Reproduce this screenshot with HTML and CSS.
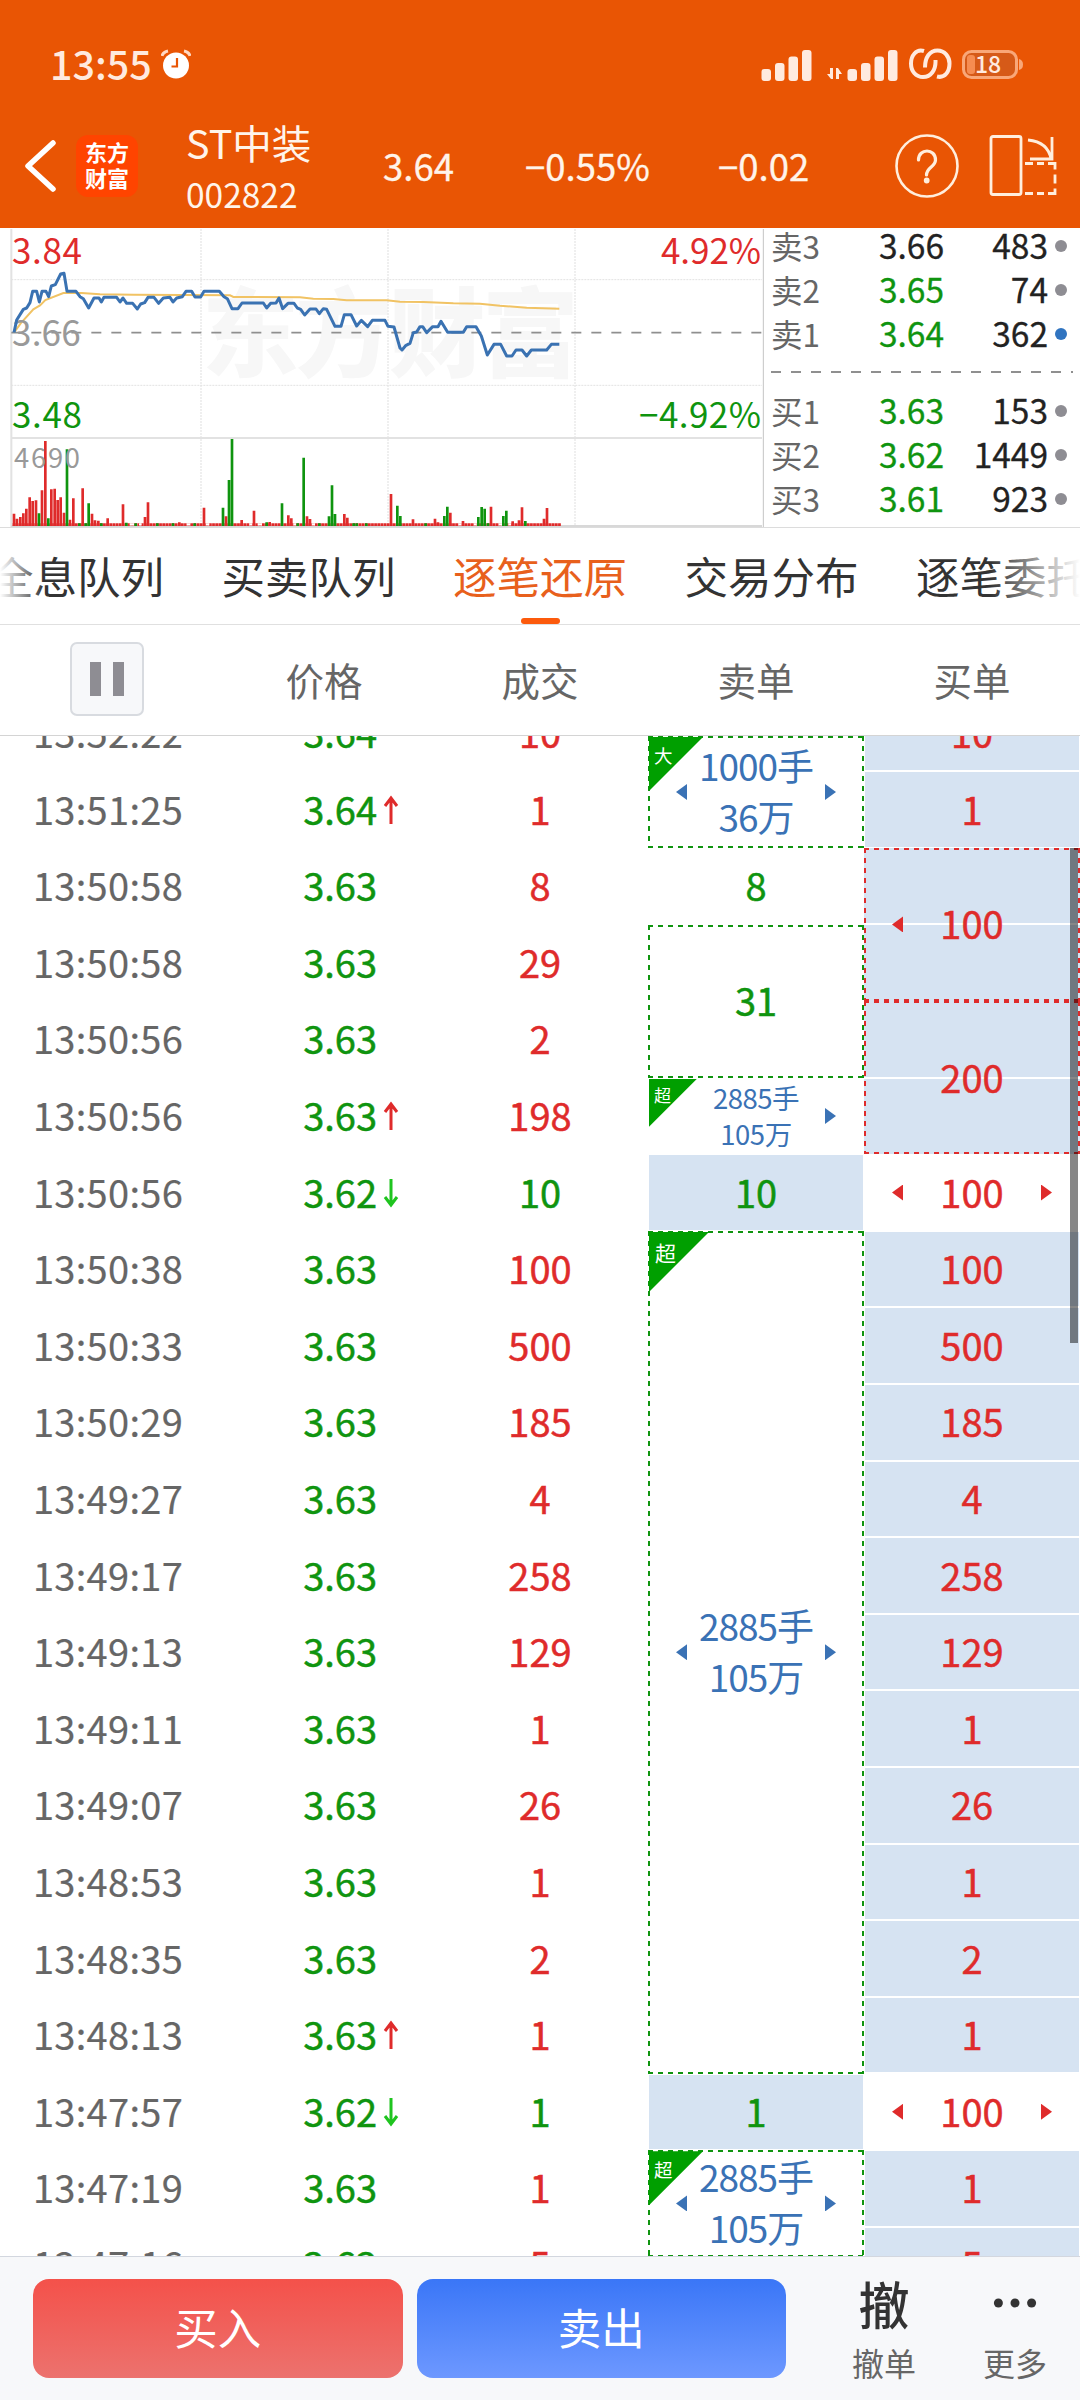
FILE: index.html
```html
<!doctype html>
<html lang="zh-CN">
	<head>
		<meta charset="utf-8" />
		<meta name="viewport" content="width=device-width, initial-scale=1" />
		<title>ST中装 逐笔还原</title>
		<link rel="stylesheet" href="styles.css" />
	</head>
	<body>
		<header class="header">
			<div class="status">
				<span class="status-time">13:55</span>
				<svg class="status-alarm" width="30" height="30" viewBox="0 0 30 30">
					<circle cx="15" cy="16.5" r="13" fill="#fff" />
					<path d="M1 7Q2 3 7 2M29 7Q28 3 23 2" stroke="#ffd9c4" stroke-width="3" fill="none" />
					<path d="M16 9v8.5h-5.500" stroke="#e95504" stroke-width="2.200" fill="none" />
				</svg>
				<svg class="status-icons" width="264" height="34" viewBox="0 0 264 34" fill="#ffeadf">
					<g id="bars">
						<rect x="1.500" y="21" width="9.500" height="12" rx="3" />
						<rect x="15" y="15" width="9.500" height="18" rx="3" />
						<rect x="28.500" y="8.500" width="9.500" height="24.500" rx="3" />
						<rect x="42" y="2" width="9.500" height="31" rx="3" />
					</g>
					<use href="#bars" x="86" />
					<path d="M73 20v11h-2l-4-5h3v-6zM76 31V20h2l4 6h-3v5z" />
					<path
						d="M164 3C156 .5 151 8 151 15.500c0 8 5 13.500 12 13.500 8 0 13-7 12.500-17M177 28.500c8 2 12.500-5 12.500-13 0-7-5-13-12-13-8 0-12.500 7-12.500 17"
						fill="none" stroke="#ffeadf" stroke-width="4" />
					<rect x="203.500" y="3.500" width="53" height="26" rx="8" fill="#d65a18" stroke="#f9a778" stroke-width="3" />
					<rect x="207" y="7" width="8" height="19" rx="3" fill="#f68c51" />
					<path d="M259 11q4 1 4 5.500t-4 5.500z" fill="#f9a778" />
					<text class="battery-text" x="228" y="25" text-anchor="middle">18</text>
				</svg>
			</div>
			<nav class="nav">
				<svg class="back" width="32" height="52" viewBox="0 0 32 52">
					<path d="M29 3L4 26l25 23" fill="none" stroke="#fff" stroke-width="5.500" stroke-linecap="round" stroke-linejoin="round" />
				</svg>
				<div class="logo">东方<br />财富</div>
				<div class="stock">
					<div class="stock-name">ST中装</div>
					<div class="stock-code">002822</div>
				</div>
				<div class="quote quote-price">3.64</div>
				<div class="quote quote-rate">−0.55%</div>
				<div class="quote quote-diff">−0.02</div>
				<div class="help">
					<svg width="64" height="64" viewBox="0 0 64 64" fill="none" stroke="#ffeedd" stroke-width="2.600">
						<circle cx="32" cy="32" r="30.500" />
						<path d="M23.500 26c0-12 17-12 17 0 0 7-9 7-9 15" stroke-width="3.200" stroke-linecap="round" />
						<circle cx="31.700" cy="46.500" r="1.600" fill="#ffeedd" />
					</svg>
				</div>
				<svg class="rotate" width="68" height="64" viewBox="0 0 68 64" fill="none" stroke="#ffeedd" stroke-width="2.800">
					<rect x="2" y="2.500" width="30" height="58" rx="2" />
					<path d="M39 6q20 2 23 19M63 3v22H41" />
					<path d="M36 29.500h8m4 0h7m4 0h7v6m0 5v9m0 5v5h-7m-4 0h-7m-4 0h-8" />
				</svg>
			</nav>
		</header>

		<section class="market">
			<svg class="chart" viewBox="0 27 2292 894">
				<text class="watermark" x="606" y="446" textLength="1130">东方财富</text>
				<g stroke="#e2e2e2" stroke-width="4" fill="none">
					<path d="M603 27V918M1164 27V918M1725 27V918" stroke-dasharray="6 3" stroke="#e8e8e8" />
					<path d="M34 179H2286M34 496H2286" stroke-width="3" stroke-dasharray="6 3" />
					<path d="M34 27V921M34 654H2286" stroke-width="6" />
					<path d="M34 918H2286" stroke-width="6" stroke="#d8d8d8" />
				</g>
				<path d="M2290 27V921" stroke="#c4c4c4" stroke-width="3" />
				<path d="M34 338H2286" stroke="#8f8f8f" stroke-width="5" stroke-dasharray="30 30" />
				<path class="vol-red" stroke-dasharray="8.300 1.050" d="M38 914H1683" />
				<path
					class="vol-red"
					d="M42 918V881M51 918V896M61 918V891M70 918V880M79 918V866M89 918V832M98 918V843M108 918V841M126 918V811M136 918V663M154 918V808M164 918V806M173 918V840M182 918V832M192 918V878M210 918V899M220 918V835M248 918V805M276 918V881M285 918V901M295 918V902M323 918V895M369 918V853M435 918V891M444 918V847M538 918V907M612 918V863M678 918V889M725 918V900M762 918V872M809 918V906M865 918V886M874 918V895M921 918V889M930 918V897M1033 918V882M1042 918V893M1173 918V822M1239 918V898M1305 918V896M1314 918V907M1351 918V878M1389 918V903M1473 918V860M1538 918V904M1557 918V901M1566 918V862M1632 918V896M1641 918V864" />
				<path
					class="vol-green"
					d="M117 918V880M145 918V895M201 918V688M238 918V910M257 918V910M266 918V850M304 918V910M379 918V908M407 918V910M472 918V910M519 918V910M584 918V910M669 918V863M687 918V780M696 918V657M800 918V907M846 918V850M893 918V910M911 918V713M958 918V910M987 918V889M996 918V796M1005 918V882M1061 918V910M1070 918V910M1099 918V910M1192 918V857M1201 918V888M1277 918V910M1333 918V888M1342 918V860M1435 918V891M1445 918V861M1454 918V866M1464 918V910M1510 918V888M1519 918V872M1576 918V903" />
				<path d="M389 913h13M417 913h8M560 913h10M618 913h10M748 913h8M773 913h13M880 913h8M936 913h9M1375 913h9M1422 913h8M1496 913h10M1525 913h8" stroke="#fff" stroke-width="7" />
				<path
					d="M42 338L62 310L100 268L120 256L136 240L190 219L245 219L300 223L400 224L690 226L700 231L900 232L940 236L1000 237L1040 241L1160 241L1200 245L1270 246L1360 250L1440 251L1500 257L1580 263L1678 266"
					fill="none" stroke="#f1c364" stroke-width="6" />
				<text class="label-gray" x="36" y="377" textLength="206">3.66</text>
				<path
					d="M42 338L50 300L70 268L80 264L90 248L98 214L110 214L118 246L126 214L138 214L146 230L154 198L166 194L182 162L192 160L201 214L228 214L240 230L250 236L266 264L282 234L297 234L304 246L312 232L350 232L360 246L369 234L380 250L398 250L412 267L422 252L434 248L444 232L462 232L476 250L490 234L510 232L519 246L530 234L547 230L558 214L575 214L585 231L602 231L612 214L658 214L672 230L682 236L696 266L714 266L726 249L790 249L800 264L812 250L828 249L837 234L848 266L864 250L882 250L892 264L902 268L914 285L930 267L948 267L958 281L970 266L980 268L1005 319L1023 319L1033 284L1053 284L1070 318L1084 301L1103 320L1117 301L1155 301L1164 319L1182 321L1200 384L1206 390L1218 376L1230 370L1240 338L1250 336L1260 320L1268 320L1280 338L1298 320L1314 320L1323 304L1343 337L1390 337L1400 320L1428 320L1444 348L1462 405L1482 373L1502 373L1520 408L1536 408L1548 390L1566 390L1580 408L1594 390L1640 390L1654 373L1678 373"
					fill="none" stroke="#3a72b2" stroke-width="9" stroke-linejoin="round" />
				<text class="label-red" x="36" y="132" textLength="210">3.84</text>
				<text class="label-green" x="36" y="624" textLength="210">3.48</text>
				<text class="label-red" x="2283" y="132" text-anchor="end" textLength="300">4.92%</text>
				<text class="label-green" x="2283" y="624" text-anchor="end" textLength="366">−4.92%</text>
				<text class="label-volume" x="42" y="743" textLength="198">4690</text>
			</svg>
			<div class="book">
				<div class="book-row"><span>卖3</span><b class="flat">3.66</b><b>483</b><i></i></div>
				<div class="book-row"><span>卖2</span><b class="down">3.65</b><b>74</b><i></i></div>
				<div class="book-row"><span>卖1</span><b class="down">3.64</b><b>362</b><i class="active"></i></div>
				<div class="book-split"></div>
				<div class="book-row"><span>买1</span><b class="down">3.63</b><b>153</b><i></i></div>
				<div class="book-row"><span>买2</span><b class="down">3.62</b><b>1449</b><i></i></div>
				<div class="book-row"><span>买3</span><b class="down">3.61</b><b>923</b><i></i></div>
			</div>
		</section>

		<div class="tabs">
			<span>全息队列</span>
			<span>买卖队列</span>
			<span class="tab-active">逐笔还原</span>
			<span>交易分布</span>
			<span>逐笔委托</span>
		</div>

		<div class="columns">
			<div><button class="pause" aria-label="暂停"></button></div>
			<div>价格</div>
			<div>成交</div>
			<div>卖单</div>
			<div>买单</div>
		</div>

		<main class="list">
			<div class="col col-time">
				<div>13:52:22</div>
				<div>13:51:25</div>
				<div>13:50:58</div>
				<div>13:50:58</div>
				<div>13:50:56</div>
				<div>13:50:56</div>
				<div>13:50:56</div>
				<div>13:50:38</div>
				<div>13:50:33</div>
				<div>13:50:29</div>
				<div>13:49:27</div>
				<div>13:49:17</div>
				<div>13:49:13</div>
				<div>13:49:11</div>
				<div>13:49:07</div>
				<div>13:48:53</div>
				<div>13:48:35</div>
				<div>13:48:13</div>
				<div>13:47:57</div>
				<div>13:47:19</div>
				<div>13:47:16</div>
			</div>
			<div class="col col-price">
				<div>3.64</div>
				<div>3.64<svg class="up" viewBox="0 0 16 30"><path d="M8 29V3M2 11L8 3l6 8" /></svg></div>
				<div>3.63</div>
				<div>3.63</div>
				<div>3.63</div>
				<div>3.63<svg class="up" viewBox="0 0 16 30"><path d="M8 29V3M2 11L8 3l6 8" /></svg></div>
				<div>3.62<svg class="fall" viewBox="0 0 16 30"><path d="M8 1v26M2 19l6 8 6-8" /></svg></div>
				<div>3.63</div>
				<div>3.63</div>
				<div>3.63</div>
				<div>3.63</div>
				<div>3.63</div>
				<div>3.63</div>
				<div>3.63</div>
				<div>3.63</div>
				<div>3.63</div>
				<div>3.63</div>
				<div>3.63<svg class="up" viewBox="0 0 16 30"><path d="M8 29V3M2 11L8 3l6 8" /></svg></div>
				<div>3.62<svg class="fall" viewBox="0 0 16 30"><path d="M8 1v26M2 19l6 8 6-8" /></svg></div>
				<div>3.63</div>
				<div>3.63</div>
			</div>
			<div class="col col-volume">
				<div>10</div>
				<div>1</div>
				<div>8</div>
				<div>29</div>
				<div>2</div>
				<div>198</div>
				<div class="down">10</div>
				<div>100</div>
				<div>500</div>
				<div>185</div>
				<div>4</div>
				<div>258</div>
				<div>129</div>
				<div>1</div>
				<div>26</div>
				<div>1</div>
				<div>2</div>
				<div>1</div>
				<div class="down">1</div>
				<div>1</div>
				<div>5</div>
			</div>
			<div class="col col-sell">
				<div class="order box clip-top">
					<em class="badge badge-m">大</em>
					<span class="arrow-left"></span><p>1000手<br />36万</p><span class="arrow-right"></span>
				</div>
				<div>8</div>
				<div class="box rows-2">31</div>
				<div class="order order-small">
					<em class="badge badge-s">超</em>
					<p>2885手<br />105万</p><span class="arrow-right"></span>
				</div>
				<div class="fill">10</div>
				<div class="order box rows-11">
					<em class="badge badge-l">超</em>
					<span class="arrow-left"></span><p>2885手<br />105万</p><span class="arrow-right"></span>
				</div>
				<div class="fill">1</div>
				<div class="order box clip-bottom">
					<em class="badge badge-m">超</em>
					<span class="arrow-left"></span><p>2885手<br />105万</p><span class="arrow-right"></span>
				</div>
			</div>
			<div class="col col-buy">
				<div class="fill">10</div>
				<div class="fill">1</div>
				<div class="box rows-2"><span class="arrow-left"></span>100</div>
				<div class="box rows-2">200</div>
				<div><span class="arrow-left"></span>100<span class="arrow-right"></span></div>
				<div class="fill">100</div>
				<div class="fill">500</div>
				<div class="fill">185</div>
				<div class="fill">4</div>
				<div class="fill">258</div>
				<div class="fill">129</div>
				<div class="fill">1</div>
				<div class="fill">26</div>
				<div class="fill">1</div>
				<div class="fill">2</div>
				<div class="fill">1</div>
				<div><span class="arrow-left"></span>100<span class="arrow-right"></span></div>
				<div class="fill">1</div>
				<div class="fill">5</div>
			</div>
			<div class="scrollbar"></div>
		</main>

		<footer class="footer">
			<button class="trade trade-buy">买入</button>
			<button class="trade trade-sell">卖出</button>
			<div class="tool">
				<span class="tool-icon">撤</span>
				<span class="tool-label">撤单</span>
			</div>
			<div class="tool tool-more">
				<span class="tool-icon"><svg width="44" height="10" viewBox="0 0 44 10" fill="#333"><circle cx="5.400" cy="5" r="4.500" /><circle cx="22" cy="5" r="4.500" /><circle cx="38.600" cy="5" r="4.500" /></svg></span>
				<span class="tool-label">更多</span>
			</div>
		</footer>
	</body>
</html>
```
FILE: styles.css
```css
:root {
	--red: #df2b2b;
	--green: #0f940f;
	--blue: #3a72b5;
	--fill: #d6e3f2;
	--row: 76.6px;
}

* {
	box-sizing: border-box;
}

body {
	background: #fff;
	color: #333;
	display: flex;
	flex-direction: column;
	font-family: "Noto Sans CJK SC", sans-serif;
	height: 2400px;
	margin: 0;
	overflow: hidden;
	width: 1080px;
}

button {
	border: 0;
	font-family: inherit;
	padding: 0;
}

/* Header */
.header {
	background: #e95504;
	color: #fff4ea;
	height: 228px;
}

.status {
	align-items: flex-start;
	display: flex;
	height: 104px;
	padding: 48px 56px 0 50px;
}

.status-time {
	color: #ffeadf;
	font-size: 39.5px;
	font-weight: 500;
	line-height: 32px;
	margin-top: -1px;
	width: 111px;
}

.status-alarm {
	margin-top: 1px;
}

.status-icons {
	margin-left: auto;
}

.battery-text {
	font-size: 23px;
	font-weight: 500;
}

.nav {
	align-items: center;
	display: flex;
	height: 124px;
	padding-left: 24px;
}

.back {
	margin-right: 20px;
}

.logo {
	background: #ff4400;
	border-radius: 12px;
	color: #fff;
	font-size: 22px;
	font-weight: 700;
	height: 62px;
	line-height: 26px;
	padding-top: 3px;
	text-align: center;
	width: 62px;
}

.stock {
	margin-left: 48px;
	width: 196px;
}

.stock-name {
	font-size: 39.5px;
	line-height: 52px;
	margin-top: 4px;
}

.stock-code {
	font-size: 33.5px;
	line-height: 52px;
}

.quote {
	font-size: 36.5px;
	line-height: 40px;
	-webkit-text-stroke: 0.3px;
}

.quote-price {
	margin-left: 1px;
	width: 142px;
}

.quote-rate {
	width: 193px;
}

.quote-diff {
	width: 177px;
}

.help {
	height: 64px;
	width: 94px;
}

/* Intraday chart and order book */
.market {
	border-bottom: 1px solid #dcdcdc;
	display: flex;
	height: 300px;
	padding-top: 1px;
}

.chart {
	flex: none;
	height: 298px;
	width: 764px;
}

.chart text {
	font-size: 105px;
}

.chart .watermark {
	fill: #f7f7f7;
	font-size: 290px;
	font-weight: 900;
}

.chart .label-red {
	fill: var(--red);
}

.chart .label-green {
	fill: var(--green);
}

.chart .label-gray {
	fill: #999;
}

.chart .label-volume {
	fill: #999;
	font-size: 82px;
}

.vol-red {
	stroke: #df2b2b;
	stroke-width: 8;
}

.vol-green {
	stroke: #0f940f;
	stroke-width: 8;
}

.book {
	flex: 1;
	padding: 0 6px 0 7px;
	margin-top: -6px;
}

.book-row {
	align-items: center;
	display: grid;
	grid-template-columns: 60px 113px 104px 19px;
	height: 44px;
	line-height: 44px;
}

.book-row span {
	color: #666;
	font-size: 31.5px;
}

.book-row b {
	color: #222;
	font-size: 33.5px;
	font-weight: 400;
	text-align: right;
	-webkit-text-stroke: 0.3px;
}

.book-row b.down,
.down {
	color: var(--green);
}

.book-row i {
	background: #8e8d93;
	border-radius: 50%;
	height: 12px;
	justify-self: end;
	margin-top: 1px;
	width: 12px;
}

.book-row i.active {
	background: #3074c0;
}

.book-split {
	background: repeating-linear-gradient(90deg, #8f8f8f 0 10px, transparent 10px 20px) 0 16px / 302px 2px no-repeat;
	height: 33px;
}

/* Tabs */
.tabs {
	border-bottom: 1px solid #e0e0e0;
	display: flex;
	font-size: 43.5px;
	gap: 57.5px;
	height: 97px;
	justify-content: center;
	line-height: 95px;
	position: relative;
	white-space: nowrap;
}

.tabs::after {
	background: linear-gradient(90deg, #fff, #fff0 44px, #fff0 990px, #fff 1080px);
	content: "";
	inset: 0 0 1px;
	position: absolute;
}

.tab-active {
	color: #e8601c;
	position: relative;
}

.tab-active::after {
	background: #fc5a0c;
	border-radius: 3px;
	bottom: 0;
	content: "";
	height: 6px;
	left: 68px;
	position: absolute;
	width: 39px;
}

.columns {
	align-items: center;
	border-bottom: 1px solid #d4d4d4;
	color: #666;
	display: grid;
	font-size: 38.5px;
	grid-template-columns: repeat(5, 216px);
	height: 111px;
	line-height: 109px;
	text-align: center;
}

.columns div {
	height: 110px;
}

.pause {
	background:
		linear-gradient(#8e8d93, #8e8d93) 18px 18px / 11px 34px no-repeat,
		linear-gradient(#8e8d93, #8e8d93) 41px 18px / 11px 34px no-repeat,
		#f7f8fa;
	border: 2px solid #d8dbe0;
	border-radius: 7px;
	display: block;
	height: 74px;
	margin: 17px 0 0 70px;
	width: 74px;
}

/* Tick list */
.list {
	display: flex;
	flex: none;
	font-size: 38px;
	height: 1520px;
	overflow: hidden;
	position: relative;
}

.col {
	flex: none;
	margin-top: -41.3px;
	width: 216px;
	-webkit-text-stroke: 0.5px;
}

.col > div {
	align-items: center;
	display: flex;
	height: var(--row);
	justify-content: center;
	line-height: 50px;
	padding-bottom: 2px;
	position: relative;
}

.col-time {
	color: #666;
	letter-spacing: 0.3px;
	-webkit-text-stroke: 0.2px;
}

.col-price {
	color: var(--green);
}

.col-price > div {
	justify-content: flex-end;
	padding-right: 55px;
}

.col-price svg {
	bottom: 23px;
	fill: none;
	height: 30px;
	position: absolute;
	right: 33px;
	stroke-width: 3;
	width: 16px;
}

.up {
	stroke: var(--red);
}

.fall {
	stroke: #1fc41f;
}

.col-volume,
.col-buy {
	color: var(--red);
}

.col-volume .down {
	color: var(--green);
}

.col-sell {
	--edge: var(--green);
	color: var(--green);
	margin-top: 0;
}

.col-buy {
	--edge: var(--red);
}

.col > .rows-2 {
	height: calc(var(--row) * 2);
}

.col > .rows-11 {
	height: calc(var(--row) * 11);
}

.col > .clip-top {
	height: 112px;
}

.col > .clip-bottom {
	height: 106.5px;
}

.fill {
	background: linear-gradient(var(--fill), var(--fill)) 1px 1px / 214px calc(100% - 2px) no-repeat;
}

.box {
	background:
		repeating-linear-gradient(90deg, var(--edge) 0 5px, transparent 5px 10px) 0 0 / 100% 2px no-repeat,
		repeating-linear-gradient(90deg, var(--edge) 0 5px, transparent 5px 10px) 0 100% / 100% 2px no-repeat,
		repeating-linear-gradient(var(--edge) 0 5px, transparent 5px 10px) 0 0 / 2px 100% no-repeat,
		repeating-linear-gradient(var(--edge) 0 5px, transparent 5px 10px) 100% 0 / 2px 100% no-repeat;
}

.col-buy .box {
	background:
		repeating-linear-gradient(90deg, var(--edge) 0 5px, transparent 5px 10px) 0 0 / 100% 2px no-repeat,
		repeating-linear-gradient(90deg, var(--edge) 0 5px, transparent 5px 10px) 0 100% / 100% 2px no-repeat,
		repeating-linear-gradient(var(--edge) 0 5px, transparent 5px 10px) 0 0 / 2px 100% no-repeat,
		repeating-linear-gradient(var(--edge) 0 5px, transparent 5px 10px) 100% 0 / 2px 100% no-repeat,
		linear-gradient(#fff, #fff) 0 50% / 100% 2px no-repeat,
		var(--fill);
}

.order {
	color: var(--blue);
	text-align: center;
	-webkit-text-stroke: 0;
}

.order p {
	font-size: 37px;
	letter-spacing: -1px;
	line-height: 51px;
	margin: 0;
}

.order-small p {
	font-size: 27.5px;
	letter-spacing: -0.5px;
	line-height: 36px;
}

.arrow-left,
.arrow-right {
	background: currentColor;
	height: 16px;
	position: absolute;
	top: calc(50% - 8px);
	width: 11px;
}

.arrow-left {
	clip-path: polygon(100% 0, 100% 100%, 0 50%);
	left: 28px;
}

.arrow-right {
	clip-path: polygon(0 0, 100% 50%, 0 100%);
	left: 177px;
}

.badge {
	background: #009f00;
	clip-path: polygon(0 0, 100% 0, 0 100%);
	color: #fff;
	font-style: normal;
	left: 1px;
	position: absolute;
	text-align: left;
	top: 1px;
}

.badge-s {
	font-size: 17px;
	height: 48px;
	line-height: 32px;
	padding-left: 5px;
	width: 48px;
}

.badge-m {
	font-size: 18.5px;
	height: 54px;
	line-height: 37px;
	padding-left: 5px;
	width: 54px;
}

.badge-l {
	font-size: 21px;
	height: 60px;
	line-height: 40px;
	padding-left: 6px;
	width: 60px;
}

.scrollbar {
	background: rgba(0, 0, 0, 0.47);
	height: 495px;
	position: absolute;
	right: 2px;
	top: 112px;
	width: 8px;
}

/* Bottom bar */
.footer {
	background: #f7f8fa;
	border-top: 1px solid #d3d7df;
	display: flex;
	flex: 1;
	padding: 22px 0 0 33px;
}

.trade {
	border-radius: 16px;
	color: #fff;
	font-size: 43.5px;
	height: 99px;
	line-height: 96px;
	margin-right: 14px;
	padding-bottom: 3px;
	width: 369.5px;
}

.trade-buy {
	background: linear-gradient(#f4514a, #ec726e);
}

.trade-sell {
	background: linear-gradient(#3a76f7, #6d98ff);
}

.tool {
	align-items: center;
	display: flex;
	flex-direction: column;
	margin-left: 32px;
	width: 104px;
}

.tool-more {
	margin-left: 27px;
}

.tool-icon {
	align-items: center;
	display: flex;
	font-size: 51px;
	font-weight: 500;
	height: 48px;
	line-height: 48px;
	margin-bottom: 15px;
}

.tool-label {
	color: #666;
	font-size: 32px;
	line-height: 40px;
}
```
